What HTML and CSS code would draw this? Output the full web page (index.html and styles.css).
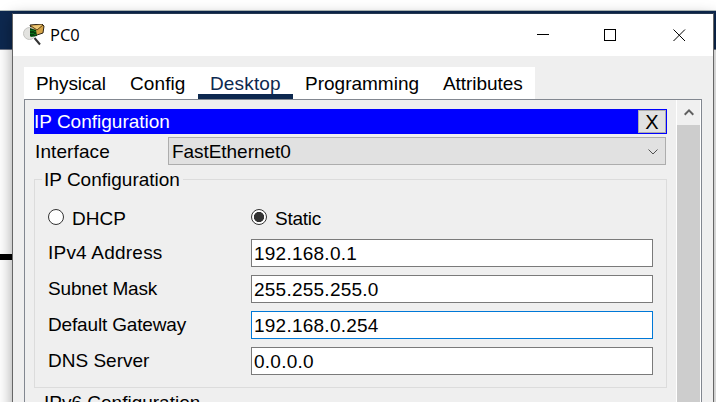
FILE: index.html
```html
<!DOCTYPE html>
<html lang="en">
<head>
<meta charset="utf-8">
<title>PC0</title>
<link rel="stylesheet" href="styles.css">
</head>
<body>
<div class="desktop">
  <div class="band"></div>
  <div class="cable"></div>
  <main class="window">
    <header class="titlebar">
      <svg class="app-icon" width="22" height="22" viewBox="0 0 22 22">
        <path d="M7 1 19 0 21 2 20 9 11 12z" fill="#d5a346" stroke="#302718" stroke-width="1"/>
        <path d="M8 2 14 6 19 1z" fill="#edc777"/>
        <path d="M8 2 14 6 20 1" fill="none" stroke="#604619"/>
        <path d="M11.500 14 17 20.500" stroke="#333" stroke-width="2"/>
        <circle cx="6.500" cy="9.500" r="6" fill="#e2e2df" stroke="#c4c4c1"/>
        <path d="M7 4 13 6 14 12 8 13 7 12z" fill="#063f0b"/>
        <path d="M8 6v1m2-1v1m2 0v1M8 9v1m2-1v1m2 0v1m-3 1v1" stroke="#14a92b"/>
      </svg>
      <span class="title">PC0</span>
      <svg class="controls" width="151" height="14" viewBox="0 0 151 14" fill="none" stroke="#000">
        <path d="M0 6.5h12M67.5 1.5h11v11h-11z" shape-rendering="crispEdges"/>
        <path d="m136.5 1.5 11.5 11.5m0-11.5-11.5 11.5"/>
      </svg>
    </header>
    <nav class="tabs">
      <span class="tab physical">Physical</span>
      <span class="tab config">Config</span>
      <span class="tab active">Desktop</span>
      <span class="tab programming">Programming</span>
      <span class="tab attributes">Attributes</span>
    </nav>
    <section class="pane">
      <div class="content">
        <div class="heading"><span>IP Configuration</span><button class="close">X</button></div>
        <div class="interface">
          <span class="interface-label">Interface</span>
          <div class="select"><span>FastEthernet0</span>
            <svg width="10" height="6" viewBox="0 0 10 6" fill="none" stroke="#505050"><path d="m.5.5 4.5 4.5L9.500.5"/></svg>
          </div>
        </div>
        <fieldset class="group">
          <legend>IP Configuration</legend>
          <div class="modes">
            <label class="mode"><i class="radio"></i><span>DHCP</span></label>
            <label class="mode static"><i class="radio checked"></i><span>Static</span></label>
          </div>
          <div class="row"><span class="wide">IPv4 Address</span><div class="field">192.168.0.1</div></div>
          <div class="row"><span class="tight">Subnet Mask</span><div class="field">255.255.255.0</div></div>
          <div class="row"><span class="tight">Default Gateway</span><div class="field focused">192.168.0.254</div></div>
          <div class="row"><span>DNS Server</span><div class="field">0.0.0.0</div></div>
        </fieldset>
        <div class="next-group">IPv6 Configuration</div>
      </div>
      <div class="scrollbar">
        <div class="scroll-up"><svg width="10" height="7" viewBox="0 0 10 7" fill="none" stroke="#606060" stroke-width="2"><path d="m.7 5.700 4.300-4.300 4.300 4.300"/></svg></div>
        <div class="thumb"></div>
      </div>
    </section>
  </main>
</div>
</body>
</html>
```

FILE: styles.css
```css
* { box-sizing: border-box; }
body {
  margin: 0;
  overflow: hidden;
  font: 19px/24px "Liberation Sans", Arial, sans-serif;
  color: #000;
}
.desktop {
  position: relative;
  width: 716px;
  height: 402px;
  padding: 13px 2px 0 12px;
  overflow: hidden;
  background: #fff;
}
.band {
  position: absolute;
  top: 10px;
  left: 0;
  width: 716px;
  height: 40px;
  background: #0d284f;
  border-top: 1px solid #b5bfbd;
  border-bottom: 1px solid #71798a;
}
.cable {
  position: absolute;
  top: 254px;
  left: 0;
  width: 12px;
  height: 6px;
  background: #000;
}
.window {
  position: relative;
  width: 702px;
  height: 410px;
  border: 1px solid #666;
  border-top-color: #24364f;
  background: #efefef;
  box-shadow: 0 4px 14px rgba(0, 0, 0, .38);
}
.titlebar {
  display: flex;
  height: 42px;
  padding: 10px 25px 0 10px;
  background: #fff;
}
.title {
  margin: -1px 0 0 5px;
  font: 16.5px/24px "Open Sans", sans-serif;
}
.controls { margin: 4px 0 0 auto; }
.tabs {
  display: flex;
  width: 511px;
  height: 32px;
  margin: 11px 0 0 11px;
  background: #fff;
}
.tab { padding-top: 5px; }
.physical { width: 94px; padding-left: 12px; letter-spacing: -.1px; }
.config { width: 80px; padding-left: 12px; letter-spacing: .1px; }
.active {
  width: 95px;
  padding-left: 12px;
  border-bottom: 5px solid #0d284f;
  color: #0d284f;
  letter-spacing: .15px;
}
.programming { width: 138px; padding-left: 12px; }
.attributes { padding-left: 12px; letter-spacing: -.05px; }
.pane {
  display: flex;
  width: 678px;
  height: 310px;
  margin-left: 11px;
  border: 1px solid #828790;
}
.content { width: 651px; padding: 9px 9px 0; }
.heading {
  display: flex;
  justify-content: space-between;
  width: 633px;
  height: 25px;
  padding: 1px 1px 1px 0;
  background: #00f;
  color: #fff;
  line-height: 23px;
}
.close {
  width: 28px;
  height: 23px;
  padding: 0;
  border: 1px solid #adadad;
  background: #e1e1e1;
  color: #000;
  font: 20px/22px "Liberation Sans", Arial, sans-serif;
}
.interface { display: flex; margin-top: 3px; height: 28px; }
.interface-label { width: 134px; padding: 3px 0 0 1px; letter-spacing: .1px; }
.select {
  display: flex;
  justify-content: space-between;
  width: 498px;
  height: 28px;
  padding: 2px 7px 0 3px;
  border: 1px solid #adadad;
  background: #e1e1e1;
  letter-spacing: -.05px;
}
.select svg { margin-top: 9px; }
.group {
  width: 633px;
  height: 221px;
  margin: 2px 0 0;
  padding: 0 13px;
  border: 1px solid #dcdcdc;
}
.group legend { height: 25px; margin-left: -6px; padding: 1px 3px 0 2px; }
.modes { display: flex; height: 47px; padding-top: 14px; }
.mode { display: flex; width: 203px; line-height: 26px; }
.static { letter-spacing: -.25px; }
.radio {
  width: 16px;
  height: 16px;
  margin: 3px 8px 0 0;
  border: 1px solid #333;
  border-radius: 50%;
  background: #fff;
}
.checked { background: radial-gradient(circle, #333 0 4.8px, #fff 5.4px); }
.row { display: flex; height: 28px; margin-bottom: 8px; line-height: 28px; }
.row > span { width: 203px; }
.wide { letter-spacing: .22px; }
.tight { letter-spacing: -.16px; }
.field {
  width: 402px;
  height: 28px;
  padding-left: 2px;
  border: 1px solid #7a7a7a;
  background: #fff;
  letter-spacing: .24px;
}
.focused { border-color: #0078d7; }
.next-group { padding: 3px 0 0 10px; }
.scrollbar { width: 25px; border: solid #fff; border-width: 0 1px; }
.scroll-up { height: 25px; padding: 6px 0 0 7px; background: #f0f0f0; }
.scroll-up svg { display: block; margin-top: 3px; }
.thumb { height: 300px; background: #cdcdcd; }
```
